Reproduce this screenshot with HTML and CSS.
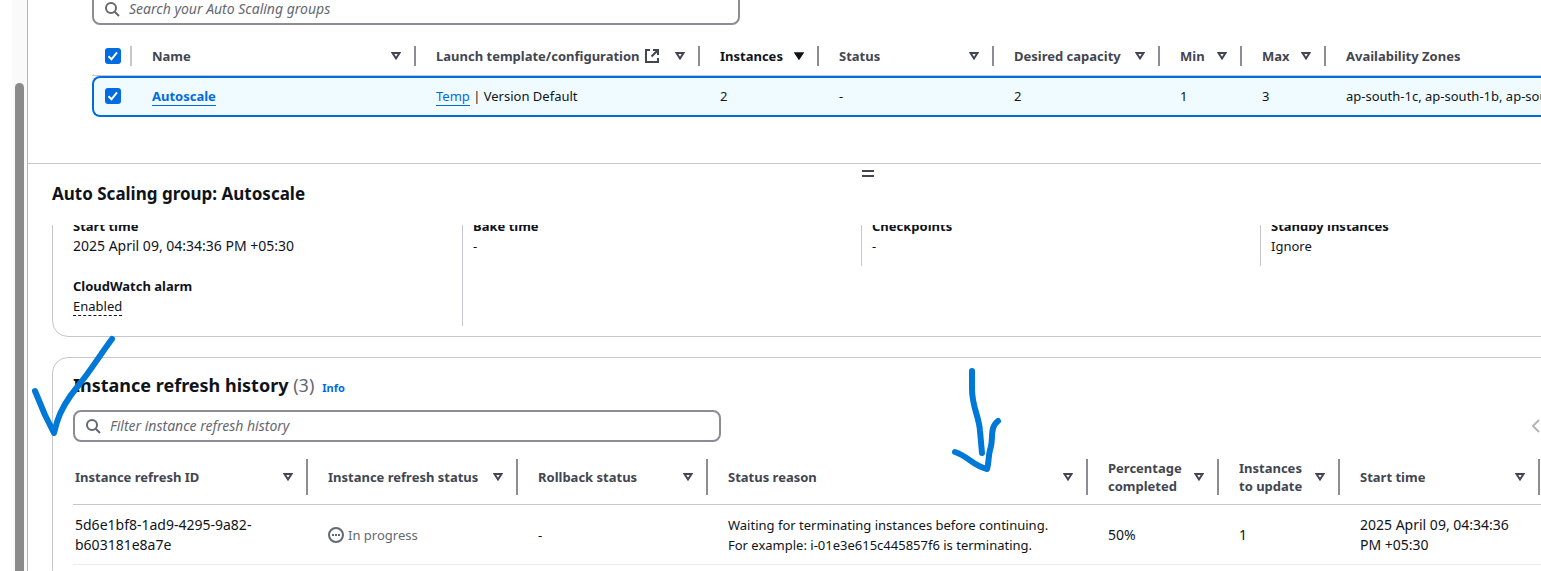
FILE: index.html
```html
<!DOCTYPE html>
<html lang="en">
<head>
<meta charset="utf-8">
<title>Auto Scaling groups</title>
<link rel="stylesheet" href="styles.css">
</head>
<body>
<svg class="defs" width="0" height="0" aria-hidden="true">
  <symbol id="sort" viewBox="0 0 10 10"><path d="M1.500 2h7L5 7.500z" fill="none" stroke="currentColor" stroke-width="2"/></symbol>
  <symbol id="sorted" viewBox="0 0 10 10"><path d="M1 2h8L5 8z" fill="currentColor" stroke="currentColor" stroke-width="1.5"/></symbol>
  <symbol id="search" viewBox="0 0 16 16"><circle cx="7" cy="7" r="5" fill="none" stroke="currentColor" stroke-width="2"/><path d="M10.7 10.7L15 15" stroke="currentColor" stroke-width="2"/></symbol>
  <symbol id="check" viewBox="0 0 16 16"><path d="M3.5 8.3l3 3 5.500-7" fill="none" stroke="#fff" stroke-width="2"/></symbol>
</svg>
<div class="page">
  <div class="gutter"></div>
  <div class="scrollbar"><div class="thumb"></div></div>
  <main class="main">
    <div class="canvas">
      <section class="groups">
        <label class="search"><svg width="16" height="16"><use href="#search"/></svg><input type="search" placeholder="Search your Auto Scaling groups" aria-label="Search your Auto Scaling groups"></label>
        <table class="table groups-table">
          <colgroup><col class="w40"><col class="w284"><col class="w284"><col class="w119"><col class="w175"><col class="w166"><col class="w82"><col class="w84"><col></colgroup>
          <thead><tr>
            <th><div class="head pick"><span class="box"><input type="checkbox" checked aria-label="Select all groups"><svg width="16" height="16"><use href="#check"/></svg></span></div></th>
            <th><div class="head">Name<button aria-label="Sort by name"><svg width="10" height="10"><use href="#sort"/></svg></button></div></th>
            <th><div class="head"><span class="with-icon">Launch template/configuration<svg width="16" height="16" viewBox="0 0 16 16"><path d="M6 2H2v12h12v-4M9 2h5v5M14 2L7.500 8.500" fill="none" stroke="currentColor" stroke-width="2"/></svg></span><button aria-label="Sort by launch template"><svg width="10" height="10"><use href="#sort"/></svg></button></div></th>
            <th><div class="head active">Instances<button aria-label="Sort by instances"><svg width="10" height="10"><use href="#sorted"/></svg></button></div></th>
            <th><div class="head">Status<button aria-label="Sort by status"><svg width="10" height="10"><use href="#sort"/></svg></button></div></th>
            <th><div class="head">Desired capacity<button aria-label="Sort by desired capacity"><svg width="10" height="10"><use href="#sort"/></svg></button></div></th>
            <th><div class="head">Min<button aria-label="Sort by min"><svg width="10" height="10"><use href="#sort"/></svg></button></div></th>
            <th><div class="head">Max<button aria-label="Sort by max"><svg width="10" height="10"><use href="#sort"/></svg></button></div></th>
            <th><div class="head last">Availability Zones</div></th>
          </tr></thead>
          <tbody><tr>
            <td><span class="box"><input type="checkbox" checked aria-label="Select Autoscale"><svg width="16" height="16"><use href="#check"/></svg></span></td>
            <td><a class="strong" href="#">Autoscale</a></td>
            <td><a href="#">Temp</a> | Version Default</td>
            <td>2</td><td>-</td><td>2</td><td>1</td><td>3</td>
            <td>ap-south-1c, ap-south-1b, ap-south-1a</td>
          </tr></tbody>
        </table>
      </section>
      <section class="panel">
        <button class="handle" aria-label="Resize panel"><span></span><span></span></button>
        <h2>Auto Scaling group: Autoscale</h2>
        <div class="panel-body">
          <div class="card details">
            <dl><dt>Start time</dt><dd class="code">2025 April 09, 04:34:36 PM +05:30</dd><dt>CloudWatch alarm</dt><dd><span class="dashed">Enabled</span></dd></dl>
            <dl class="tall"><dt>Bake time</dt><dd>-</dd></dl>
            <dl><dt>Checkpoints</dt><dd>-</dd></dl>
            <dl><dt>Standby instances</dt><dd>Ignore</dd></dl>
          </div>
          <div class="card history">
            <div class="title"><h3>Instance refresh history <span>(3)</span></h3><a href="#">Info</a></div>
            <div class="toolbar">
              <label class="search"><svg width="16" height="16"><use href="#search"/></svg><input type="search" placeholder="Filter instance refresh history" aria-label="Filter instance refresh history"></label>
              <button class="prev" aria-label="Previous page"><svg width="16" height="16" viewBox="0 0 16 16"><path d="M11 2L5 8l6 6" fill="none" stroke="currentColor" stroke-width="2"/></svg></button>
            </div>
            <table class="table history-table">
              <colgroup><col class="w235"><col class="w210"><col class="w190"><col class="w380"><col class="w131"><col class="w121"><col class="w200"><col></colgroup>
              <thead><tr>
                <th><div class="head">Instance refresh ID<button aria-label="Sort by ID"><svg width="10" height="10"><use href="#sort"/></svg></button></div></th>
                <th><div class="head">Instance refresh status<button aria-label="Sort by refresh status"><svg width="10" height="10"><use href="#sort"/></svg></button></div></th>
                <th><div class="head">Rollback status<button aria-label="Sort by rollback status"><svg width="10" height="10"><use href="#sort"/></svg></button></div></th>
                <th><div class="head">Status reason<button aria-label="Sort by reason"><svg width="10" height="10"><use href="#sort"/></svg></button></div></th>
                <th><div class="head">Percentage<br>completed<button aria-label="Sort by percentage"><svg width="10" height="10"><use href="#sort"/></svg></button></div></th>
                <th><div class="head">Instances<br>to update<button aria-label="Sort by instances to update"><svg width="10" height="10"><use href="#sort"/></svg></button></div></th>
                <th><div class="head">Start time<button aria-label="Sort by start time"><svg width="10" height="10"><use href="#sort"/></svg></button></div></th>
                <th></th>
              </tr></thead>
              <tbody><tr>
                <td class="code">5d6e1bf8-1ad9-4295-9a82-<br>b603181e8a7e</td>
                <td><span class="status"><svg width="16" height="16" viewBox="0 0 16 16"><circle cx="8" cy="8" r="7" fill="none" stroke="currentColor" stroke-width="2"/><path d="M4 8h2M7 8h2M10 8h2" stroke="currentColor" stroke-width="2"/></svg>In progress</span></td>
                <td>-</td>
                <td>Waiting for terminating instances before continuing.<br>For example: i-01e3e615c445857f6 is terminating.</td>
                <td class="code">50%</td><td class="code">1</td>
                <td class="code">2025 April 09, 04:34:36<br>PM +05:30</td><td></td>
              </tr></tbody>
            </table>
          </div>
        </div>
      </section>
    </div>
  </main>
  <svg class="ink" width="1010" height="480" viewBox="0 0 1010 480" aria-hidden="true">
    <path d="M112 339C100 355 89 373 78 386C68 398 61 409 57 422L54 433L45 415L35 391"/>
    <path d="M972 371V389C972 407 979 416 980 431L982 453M998 421C989 428 994 439 990 450C988 458 989 463 987 469C973 466 968 456 955 452"/>
  </svg>
</div>
</body>
</html>
```
FILE: styles.css
```css
* { box-sizing: border-box; }
body {
  margin: 0;
  background: #fff;
  color: #0f141a;
  font: 13px/20px "Noto Sans", "Open Sans", sans-serif;
}
button { padding: 0; border: 0; background: none; color: inherit; cursor: pointer; }
svg { display: block; flex: none; }
a { color: #006ce0; text-decoration: none; }
.defs { position: absolute; }

.page { position: relative; display: flex; height: 100vh; overflow: hidden; }
.gutter { flex: none; width: 12px; }
.scrollbar { flex: none; width: 15px; padding: 83px 3px 0; background: #fafafa; }
.thumb { height: 100%; border-radius: 5px 5px 0 0; background: #8b8b8b; }
.main { flex: 1; min-width: 0; overflow: hidden; border-left: 1px solid #b4b4bb; }
.canvas { width: calc(100% + 167px); }

.groups { height: 163px; margin-left: 64px; overflow: hidden; }
.groups .search { margin: -7px 0 11px; }
.search {
  display: flex;
  align-items: center;
  gap: 9px;
  width: 648px;
  height: 32px;
  padding: 0 10px;
  border: 2px solid #8c8c94;
  border-radius: 8px;
  color: #656871;
}
.search input { flex: 1; min-width: 0; padding: 0; border: 0; outline: 0; background: none; font: inherit; font-size: 14px; }
.search input::placeholder { color: #656871; font-style: italic; opacity: 1; }

.table { width: 100%; table-layout: fixed; border-collapse: separate; border-spacing: 0; white-space: nowrap; }
.table th { padding: 10px 0 9px 20px; border-bottom: 1px solid #c6c6cd; text-align: left; }
.table td { padding: 8px 0 9px 20px; }
.head {
  display: flex;
  align-items: center;
  justify-content: space-between;
  height: 20px;
  padding-right: 13px;
  border-right: 2px solid #8c8c94;
  color: #424650;
  font-weight: 700;
  line-height: 18px;
}
.head.active { color: #0f141a; }
.head.last { border: 0; }
.head.pick { padding: 0; border-color: #c6c6cd; }
.with-icon { display: flex; align-items: center; gap: 4px; }
.box { display: grid; width: 16px; height: 16px; }
.box > * { grid-area: 1 / 1; }
.box input { appearance: none; width: 16px; height: 16px; margin: 0; border-radius: 3px; background: #006ce0; }
.box svg { pointer-events: none; z-index: 1; }

.groups-table th:first-child { padding-left: 13px; }
.groups-table td { border: solid #006ce0; border-width: 2px 0; background: #f0fbff; }
.groups-table td:first-child { padding-left: 11px; border-left-width: 2px; border-radius: 8px 0 0 8px; }
.groups-table td:last-child { border-right-width: 2px; border-radius: 0 8px 8px 0; }
.groups-table td a { border-bottom: 1px solid; }
.strong { font-weight: 700; }
.table .code, .code { font-size: 14px; }

.w40 { width: 40px; }
.w82 { width: 82px; }
.w84 { width: 84px; }
.w119 { width: 119px; }
.w121 { width: 121px; }
.w131 { width: 131px; }
.w166 { width: 166px; }
.w175 { width: 175px; }
.w190 { width: 190px; }
.w200 { width: 200px; }
.w210 { width: 210px; }
.w235 { width: 235px; }
.w284 { width: 284px; }
.w380 { width: 380px; }

.panel { border-top: 1px solid #c6c6cd; }
.handle { display: grid; gap: 3px; width: 12px; margin: 6px auto 0; }
.handle span { height: 2px; background: #424650; }
h2 { margin: 6px 24px 20px; font-size: 17px; line-height: 22px; font-weight: 700; }
.panel-body { padding: 0 24px; overflow: hidden; }
.card { padding: 0 20px; border: 1px solid #c6c6cd; border-radius: 16px; }
.details {
  display: grid;
  grid-template-columns: repeat(4, 1fr);
  align-items: start;
  margin-top: -30px;
  padding: 20px 24px 10px 10px;
}
dl { margin: 0; padding: 0 0 10px 10px; border-left: 1px solid #c6c6cd; }
dl:first-child { border: 0; }
dl.tall { align-self: stretch; }
dt { font-weight: 700; }
dd { margin: 0; }
dd + dt { margin-top: 20px; }
.dashed { border-bottom: 1px dashed #0f141a; }

.history { margin-top: 20px; padding-top: 15px; padding-bottom: 20px; }
.title { display: flex; align-items: baseline; gap: 8px; }
.title a { font-size: 11px; font-weight: 700; }
h3 { margin: 0; font-size: 18px; line-height: 24px; font-weight: 700; }
h3 span { color: #656871; font-weight: 400; }
.toolbar { display: flex; align-items: center; justify-content: space-between; margin: 12px 0 7px; }
.prev { margin-right: 119px; color: #b4b4bb; }
.history-table .head { height: 36px; }
.history-table th:first-child, .history-table td:first-child { padding-left: 2px; }
.history-table td { padding-top: 10px; border-bottom: 1px solid #ebebf0; }
.status { display: flex; align-items: center; gap: 4px; color: #656871; }

.ink { position: absolute; top: 0; left: 0; pointer-events: none; }
.ink path { fill: none; stroke: #0078d7; stroke-width: 6; stroke-linecap: round; stroke-linejoin: round; }
```
